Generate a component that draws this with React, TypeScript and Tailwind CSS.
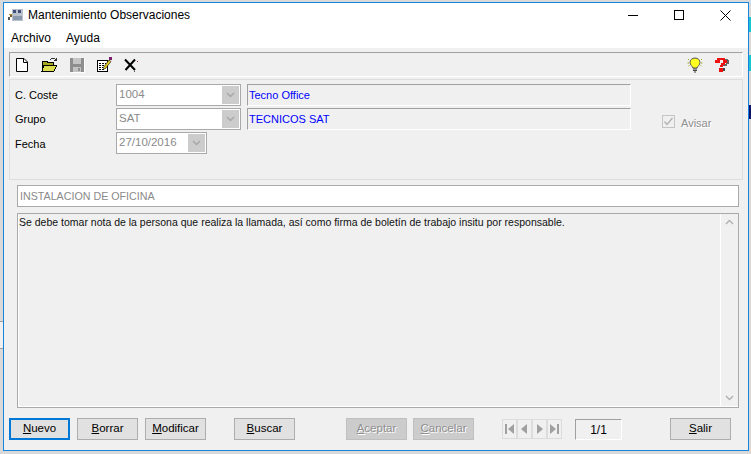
import React from "react";

const font = { fontFamily: "'Liberation Sans', sans-serif" };

function Mnemonic({ text, at = 0 }: { text: string; at?: number }) {
    return (
        <>
            {text.slice(0, at)}
            <span className="underline">{text[at]}</span>
            {text.slice(at + 1)}
        </>
    );
}

function Chevron({ up = false, color = "#a0a0a0" }: { up?: boolean; color?: string }) {
    return (
        <svg width="9" height="6" viewBox="0 0 9 6" fill="none">
            <path d={up ? "M1 5L4.5 1.5L8 5" : "M1 1L4.5 4.5L8 1"} stroke={color} strokeWidth="1.4" />
        </svg>
    );
}

function Combo({ value, width }: { value: string; width: string }) {
    return (
        <div className={`${width} h-[22px] flex items-center bg-white border border-[#a9a9a9] pl-[2px] pr-[1px]`}>
            <span className="flex-1 text-[11.5px] text-[#8a8a8a]">{value}</span>
            <div className="w-[17px] h-[18px] bg-[#cccccc] flex items-center justify-center">
                <Chevron color="#a6a6a6" />
            </div>
        </div>
    );
}

function ReadOnly({ value }: { value: string }) {
    return (
        <div className="w-[384px] h-[22px] flex items-center bg-[#f0f0f0] border border-t-[#a0a0a0] border-l-[#a0a0a0] border-b-white border-r-white pl-[1px] text-[11px] text-[#0000ff]">
            {value}
        </div>
    );
}

function Button({ label, at = 0, focused = false, disabled = false, className = "" }: { label: string; at?: number; focused?: boolean; disabled?: boolean; className?: string }) {
    let look = "bg-[#e1e1e1] border border-[#adadad] text-black";
    if (focused) look = "bg-[#e1e1e1] border-2 border-[#0078d7] text-black";
    if (disabled) look = "bg-[#cccccc] border border-[#bfbfbf] text-[#8f8f8f] [text-shadow:1px_1px_0_#ffffff]";
    return (
        <div className={`w-[61px] h-[22px] shrink-0 flex items-center justify-center text-[11.5px] ${look} ${className}`}>
            <span><Mnemonic text={label} at={at} /></span>
        </div>
    );
}

function NavCell({ d }: { d: string }) {
    return (
        <div className="w-[15px] h-[20px] border border-[#dcdcdc] flex items-center justify-center">
            <svg width="11" height="12" viewBox="0 0 11 12" fill="#a0a0a0">
                <path d={d} />
            </svg>
        </div>
    );
}

function AppGlyph() {
    return (
        <svg width="16" height="14" viewBox="0 0 16 14" shapeRendering="crispEdges">
            <rect x="4" y="1" width="11" height="12" fill="#b9c2cc" />
            <rect x="5" y="2" width="3" height="3" fill="#3f4f7a" />
            <rect x="10" y="2" width="3" height="3" fill="#3f4f7a" />
            <rect x="5" y="8" width="9" height="4" fill="#8a99ad" />
            <rect x="1" y="6" width="3" height="1" fill="#b8862d" />
            <rect x="2" y="7" width="2" height="2" fill="#7a5a20" />
            <rect x="0" y="9" width="2" height="3" fill="#555" />
        </svg>
    );
}

function IconNew() {
    return (
        <svg width="16" height="16" viewBox="0 0 16 16" fill="#fff" stroke="#000">
            <path d="M2.5 1.5H10L13.5 5V14.500H2.5Z" />
            <path d="M9.5 1.5V5.5H13.5" fill="none" />
        </svg>
    );
}

function IconOpen() {
    return (
        <svg width="17" height="16" viewBox="0 0 17 16" shapeRendering="crispEdges">
            <path d="M1 4H6V5H12V14H1Z" fill="#a8a81c" stroke="#000" strokeWidth="1" />
            <path d="M3 8H16L13 14H1Z" fill="#dcdc50" stroke="#000" strokeWidth="1" />
            <path d="M9 3L11 1H13L15 3M15 1V3H13" fill="none" stroke="#333" strokeWidth="1" />
        </svg>
    );
}

function IconSave() {
    return (
        <svg width="16" height="16" viewBox="0 0 16 16" shapeRendering="crispEdges">
            <rect x="1" y="1" width="14" height="14" fill="#8e8e8e" />
            <rect x="4" y="1" width="8" height="6" fill="#c4c4c4" />
            <rect x="4" y="10" width="8" height="5" fill="#c4c4c4" />
            <rect x="9" y="11" width="2" height="3" fill="#8e8e8e" />
            <rect x="15" y="2" width="1" height="14" fill="#fff" />
            <rect x="2" y="15" width="14" height="1" fill="#fff" />
        </svg>
    );
}

function IconEdit() {
    return (
        <svg width="16" height="16" viewBox="0 0 16 16" shapeRendering="crispEdges">
            <rect x="1.5" y="3.5" width="10" height="11" fill="#fff" stroke="#000" />
            <path d="M3 6H10M3 8H8M3 10H7M3 12H9" stroke="#000" strokeWidth="1" strokeDasharray="2 1" />
            <path d="M7 11L13 3L15 4.500L9 12Z" fill="#e8d020" stroke="#000" strokeWidth="0.6" shapeRendering="auto" />
            <rect x="13" y="0" width="3" height="3" fill="#7a1f6e" />
        </svg>
    );
}

function IconDelete() {
    return (
        <svg width="16" height="16" viewBox="0 0 16 16" fill="none">
            <path d="M2 2.500L12 13M12 2.500L2.500 13" stroke="#000" strokeWidth="2" />
            <rect x="14" y="4" width="1" height="1" fill="#a03030" />
            <rect x="11" y="14" width="1" height="1" fill="#555" />
        </svg>
    );
}

function IconBulb() {
    return (
        <svg width="16" height="16" viewBox="0 0 16 16">
            <path d="M8 1C5 1 3 3 3 5.500C3 8 5.500 9 5.800 11H10.200C10.500 9 13 8 13 5.500C13 3 11 1 8 1Z" fill="#ffff20" stroke="#555" strokeWidth="1" />
            <path d="M6 12H10M6 13.500H10M7 15H9" stroke="#444" strokeWidth="1" />
            <path d="M1 2L2 3M15 2L14 3M0.500 6H2M15.500 6H14M1.500 9L2.500 8.500M14.500 9L13.500 8.500" stroke="#a8a820" strokeWidth="1" />
        </svg>
    );
}

function IconHelp() {
    return (
        <svg width="15" height="14" viewBox="0 0 15 14" shapeRendering="crispEdges">
            <rect x="9" y="1" width="4" height="1" fill="#666" />
            <rect x="11" y="2" width="3" height="4" fill="#666" />
            <rect x="8" y="6" width="4" height="2" fill="#666" />
            <rect x="2" y="0" width="8" height="2" fill="#ee1111" />
            <rect x="0" y="2" width="5" height="3" fill="#ee1111" />
            <rect x="8" y="2" width="4" height="3" fill="#ee1111" />
            <rect x="6" y="5" width="4" height="2" fill="#ee1111" />
            <rect x="5" y="7" width="3" height="2" fill="#ee1111" />
            <rect x="4" y="10" width="4" height="4" fill="#ee1111" />
            <rect x="8" y="10" width="2" height="3" fill="#444" />
        </svg>
    );
}

function WindowButton({ children }: { children: React.ReactNode }) {
    return <div className="w-[46px] h-[20px] flex items-center justify-center">{children}</div>;
}

export default function App() {
    return (
        <div className="relative w-[751px] h-[454px] overflow-hidden bg-[#d9d9d9] pl-[3px] pt-[2px]" style={font}>
            {/* bits of the window underneath */}
            <div className="absolute right-0 top-[17px] w-[2px] h-[15px] bg-[#19c3d6]" />
            <div className="absolute right-0 top-[55px] w-[2px] h-[16px] bg-[#19c3d6]" />
            <div className="absolute right-0 top-[105px] w-[2px] h-[14px] bg-[#10106e]" />
            <div className="absolute left-0 top-[321px] w-[3px] h-[28px] bg-[#f0f0f0] border-y border-[#a0a0a0]" />

            <div className="relative w-[746px] h-[449px] flex flex-col bg-[#f0f0f0] border border-[#1883d7] text-black">
                {/* title bar */}
                <div className="h-[24px] flex items-center bg-white shrink-0">
                    <div className="ml-[4px] w-[18px]"><AppGlyph /></div>
                    <span className="ml-[2px] text-[12px]">Mantenimiento Observaciones</span>
                    <div className="ml-auto flex">
                        <WindowButton>
                            <div className="w-[10px] h-px bg-black" />
                        </WindowButton>
                        <WindowButton>
                            <div className="w-[10px] h-[10px] border border-black" />
                        </WindowButton>
                        <WindowButton>
                            <svg width="11" height="11" viewBox="0 0 11 11" stroke="#000" fill="none">
                                <path d="M0.500 0.500L10.500 10.500M10.500 0.500L0.500 10.500" />
                            </svg>
                        </WindowButton>
                    </div>
                </div>

                {/* menu */}
                <div className="h-[21px] flex items-center gap-[15px] bg-white pl-[7px] text-[12px] shrink-0">
                    <span>Archivo</span>
                    <span>Ayuda</span>
                </div>

                {/* toolbar */}
                <div className="mt-[4px] mx-[5px] h-[25px] flex items-center shrink-0 border border-t-[#a0a0a0] border-l-[#a0a0a0] border-b-white border-r-white pl-[4px] pr-[12px] gap-[11px]">
                    <IconNew />
                    <IconOpen />
                    <IconSave />
                    <IconEdit />
                    <IconDelete />
                    <div className="ml-auto flex items-center gap-[12px]">
                        <IconBulb />
                        <IconHelp />
                    </div>
                </div>

                {/* header fields */}
                <div className="mt-[2px] mx-[5px] h-[101px] shrink-0 border border-[#dedede] flex">
                    <div className="w-[106px] pl-[5px] text-[11px] flex flex-col pt-[4px]">
                        <div className="h-[22px] flex items-center">C. Coste</div>
                        <div className="mt-[2px] h-[22px] flex items-center">Grupo</div>
                        <div className="mt-[3px] h-[22px] flex items-center">Fecha</div>
                    </div>
                    <div className="flex flex-col pt-[4px] gap-[2px]">
                        <div className="flex gap-[6px]">
                            <Combo value="1004" width="w-[125px]" />
                            <ReadOnly value="Tecno Office" />
                        </div>
                        <div className="flex gap-[6px]">
                            <Combo value="SAT" width="w-[125px]" />
                            <ReadOnly value="TECNICOS SAT" />
                        </div>
                        <Combo value="27/10/2016" width="w-[91px]" />
                    </div>
                    <div className="ml-[31px] pt-[35px] flex items-start">
                        <div className="w-[13px] h-[13px] border border-[#c4c4c4] flex items-center justify-center">
                            <svg width="11" height="11" viewBox="0 0 11 11" fill="none">
                                <path d="M1.500 5.500L4 8.500L9.500 2" stroke="#b0b0b0" strokeWidth="1.300" />
                            </svg>
                        </div>
                        <span className="ml-[6px] text-[11px] text-[#8f8f8f] [text-shadow:1px_1px_0_#ffffff]">Avisar</span>
                    </div>
                </div>

                {/* subject */}
                <div className="mt-[5px] ml-[13px] w-[722px] h-[22px] shrink-0 flex items-center bg-white border border-[#a9a9a9] pl-[2px] text-[10.7px] text-[#8a8a8a]">
                    INSTALACION DE OFICINA
                </div>

                {/* note */}
                <div className="mt-[6px] ml-[13px] w-[722px] h-[195px] shrink-0 border border-[#a9a9a9]">
                    <div className="h-full flex border-l border-b border-white">
                        <div className="flex-1 text-[10.5px] leading-[16px] text-[#111]">
                            Se debe tomar nota de la persona que realiza la llamada, así como firma de boletín de trabajo insitu por responsable.
                        </div>
                        <div className="w-[18px] border-l border-white flex flex-col items-center justify-between py-[5px]">
                            <Chevron up color="#b0b0b0" />
                            <Chevron color="#b0b0b0" />
                        </div>
                    </div>
                </div>

                {/* buttons */}
                <div className="mt-[10px] ml-[5px] flex items-start">
                    <Button label="Nuevo" focused />
                    <Button label="Borrar" className="ml-[7px]" />
                    <Button label="Modificar" className="ml-[7px]" />
                    <Button label="Buscar" className="ml-[28px]" />
                    <Button label="Aceptar" disabled className="ml-[51px]" />
                    <Button label="Cancelar" disabled className="ml-[6px]" />
                    <div className="ml-[28px] flex mt-[1px]">
                        <NavCell d="M1 1H3V11H1ZM10 1V11L4 6Z" />
                        <NavCell d="M8 1V11L2 6Z" />
                        <NavCell d="M3 1V11L9 6Z" />
                        <NavCell d="M1 1V11L7 6ZM8 1H10V11H8Z" />
                    </div>
                    <div className="ml-[13px] mt-[1px] w-[47px] h-[21px] flex items-center justify-center text-[12px] border border-t-[#a0a0a0] border-l-[#a0a0a0] border-b-white border-r-white">
                        1/1
                    </div>
                    <Button label="Salir" className="ml-[48px]" />
                </div>
            </div>
        </div>
    );
}
